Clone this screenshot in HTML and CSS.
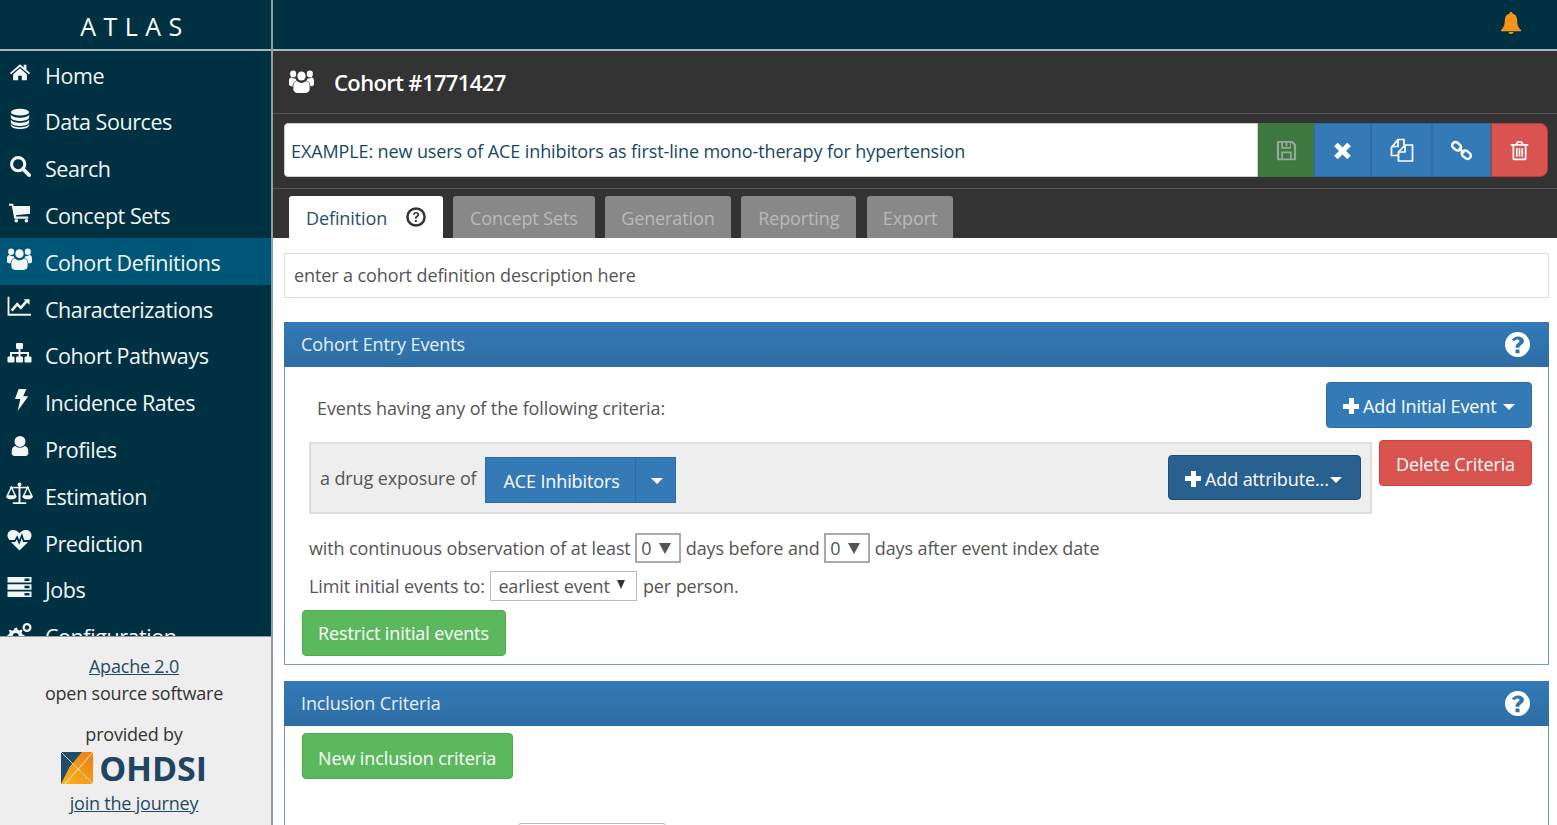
FILE: index.html
```html
<!DOCTYPE html>
<html lang="en">
<head>
<meta charset="utf-8">
<title>ATLAS</title>
<link rel="stylesheet" href="styles.css">
</head>
<body>
<svg class="defs" width="0" height="0" aria-hidden="true">
  <symbol id="i-users" viewBox="0 0 24 20" preserveAspectRatio="none">
    <circle cx="12" cy="5.2" r="4"/><circle cx="4" cy="3.4" r="2.9"/><circle cx="20" cy="3.4" r="2.9"/>
    <path d="M5.6 19.2c-.9-.6-1.400-1.500-1.400-2.700v-2.800c0-2.200 1.400-3.800 3.400-4.100 1.200 1 2.700 1.600 4.400 1.600s3.200-.6 4.400-1.600c2 .3 3.400 1.900 3.400 4.100v2.800c0 1.200-.5 2.100-1.400 2.700-.8.5-1.700.8-2.800.8H8.400c-1.100 0-2-.3-2.800-.8z"/>
    <path d="M0 12.600V9.400c0-1.600 1-2.800 2.400-3 .8.700 1.800 1 2.800 1 .4 0 .7 0 1-.1.300.8.700 1.400 1.200 1.900-2.300.6-3.800 2.500-4 5-1.800-.1-3.400-.5-3.400-1.600zM24 12.600V9.400c0-1.600-1-2.800-2.400-3-.8.700-1.800 1-2.800 1-.4 0-.7 0-1-.1-.3.800-.7 1.400-1.200 1.900 2.300.6 3.800 2.500 4 5 1.800-.1 3.400-.5 3.400-1.600z"/>
  </symbol>
  <symbol id="i-q" viewBox="0 0 24 24">
    <path fill-rule="evenodd" d="M12 0a12 12 0 1 0 0 24 12 12 0 0 0 0-24zm1.900 20.300h-3.800v-3.400h3.800v3.400zm3.600-9.700c-.5.800-1.200 1.400-2.200 2-.9.600-1.400 1-1.400 1.900v.7h-3.700v-1c0-1.700.8-2.700 2-3.500 1.100-.7 1.700-1.100 1.700-2 0-.9-.8-1.500-1.900-1.500-1.200 0-2.100.6-3 1.700L6.500 7.500C8 5.600 9.900 4.300 12.300 4.300c3 0 5.900 1.700 5.900 4.200 0 .8-.2 1.500-.7 2.100z"/>
  </symbol>
</svg>
<div class="app">
  <aside class="sidebar">
    <div class="brand">ATLAS</div>
    <nav class="nav">
      <a class="nav-item"><svg class="nav-icon" viewBox="0 0 24 24"><path d="M12 3.500 1 13l1.300 1.500L12 6.200l9.700 8.300L23 13l-4-3.500V4h-3v3z"/><path d="M12 8 4.500 14.500V21h5.500v-5h4v5h5.500v-6.500z"/></svg><span>Home</span></a>
      <a class="nav-item"><svg class="nav-icon" viewBox="0 0 24 24"><ellipse cx="12" cy="4.500" rx="10" ry="3.800"/><path d="M2 7c1 2.500 5.500 3.500 10 3.500S21 9.500 22 7v3.500c-1 2.500-5.500 3.600-10 3.600S3 13 2 10.500z"/><path d="M2 12.500c1 2.500 5.500 3.500 10 3.500s9-1 10-3.500V16c-1 2.500-5.500 3.600-10 3.600S3 18.500 2 16z"/><path d="M2 17.500c1 2.500 5.500 3.500 10 3.500s9-1 10-3.500v1.600c-.6 2.500-5.500 3.900-10 3.900S2.600 21.600 2 19.100z"/></svg><span>Data Sources</span></a>
      <a class="nav-item"><svg class="nav-icon" viewBox="0 0 24 24"><circle cx="10" cy="10" r="7.200" fill="none" stroke="currentColor" stroke-width="3.400"/><path d="M15 15l7 7" stroke="currentColor" stroke-width="4" stroke-linecap="round"/></svg><span>Search</span></a>
      <a class="nav-item"><svg class="nav-icon" viewBox="0 0 24 24"><path d="M0 3h4.500l.6 2.500H23v8.500L7.500 15.500l.4 1.500H21v2.400H5.800L3 5.300H0z"/><circle cx="8" cy="21.500" r="2"/><circle cx="19" cy="21.500" r="2"/></svg><span>Concept Sets</span></a>
      <a class="nav-item active"><svg class="nav-icon wide"><use href="#i-users"/></svg><span>Cohort Definitions</span></a>
      <a class="nav-item"><svg class="nav-icon wide" viewBox="0 0 26 24"><path d="M1 2v19.500h24.500" fill="none" stroke="currentColor" stroke-width="2"/><path d="M4.500 17l6-7 4 4 6-7" fill="none" stroke="currentColor" stroke-width="2.800"/><path d="M17.500 4.500h6.500V11z"/></svg><span>Characterizations</span></a>
      <a class="nav-item"><svg class="nav-icon wide" viewBox="0 0 24 22"><rect x="8.500" y="1" width="7" height="6" rx="1"/><rect x="0" y="14.500" width="7" height="6" rx="1"/><rect x="8.500" y="14.500" width="7" height="6" rx="1"/><rect x="17" y="14.500" width="7" height="6" rx="1"/><path d="M11 7h2v3h8.500v5h-2v-3H13v3h-2v-3H4.500v3h-2v-5H11z"/></svg><span>Cohort Pathways</span></a>
      <a class="nav-item"><svg class="nav-icon" viewBox="0 0 24 24"><path d="M10.500 0h8.500l-3.500 8H21L9.500 24l2.800-13H6.500z"/></svg><span>Incidence Rates</span></a>
      <a class="nav-item"><svg class="nav-icon" viewBox="0 0 24 24"><circle cx="12" cy="7" r="6"/><path d="M7 12c1.300 1.200 3 1.800 5 1.800s3.700-.6 5-1.800c2.700.3 4 2.500 4 6v2.300c0 1.500-1.300 2.700-3 2.700H6c-1.700 0-3-1.200-3-2.700V18c0-3.500 1.300-5.700 4-6z"/></svg><span>Profiles</span></a>
      <a class="nav-item"><svg class="nav-icon scale" viewBox="0 0 28 24"><path d="M13 2.500h2V21h6v2H7v-2h6z"/><circle cx="14" cy="2.500" r="2"/><path d="M4 5h20v1.600H4z"/><path d="M5.500 5.500 1.200 14.500h8.600zM22.500 5.500l-4.300 9h8.600z" fill="none" stroke="currentColor" stroke-width="1.500"/><path d="M0 14.500h11c0 2.300-2.500 3.500-5.500 3.500S0 16.800 0 14.500zM17 14.500h11c0 2.300-2.500 3.500-5.500 3.500S17 16.800 17 14.500z"/></svg><span>Estimation</span></a>
      <a class="nav-item"><svg class="nav-icon wide" viewBox="0 0 24 22"><path fill-rule="evenodd" d="M12 21.500 3.500 13h4.200l1.600-2.800 2.400 5.500 2.600-6.700 1.200 4h5L12 21.500zM2 11C.7 9.700 0 8 0 6.500 0 3 2.500 1 6 1c2.400 0 4.400 1.300 6 3.200C13.600 2.300 15.600 1 18 1c3.500 0 6 2 6 5.500 0 1.500-.7 3.200-2 4.500h-5.300l-2.300-7-2.700 7-2-4.700L7 11H2z"/></svg><span>Prediction</span></a>
      <a class="nav-item"><svg class="nav-icon wide" viewBox="0 0 24 22"><path fill-rule="evenodd" d="M0 1h24v5.500H0zm17 1.500v2.500h5V2.500zM0 8.200h24v5.500H0zm17 1.500v2.500h5V9.700zM0 15.500h24V21H0zm17 1.500v2.500h5V17z"/></svg><span>Jobs</span></a>
      <a class="nav-item"><svg class="nav-icon wide" viewBox="0 0 24 22"><path d="M8 5l1.500-.5.600 2.200 1.900.8 2-1.100 1.100 1.200-1 2 .8 1.900 2.100.6v1.600l-2.100.6-.8 1.900 1 2-1.100 1.200-2-1.100-1.900.8-.6 2.200H7l-.6-2.200-1.900-.8-2 1.100-1.200-1.200 1-2-.7-1.900L0 13.500v-1.600l1.600-.6.700-1.900-1-2L2.500 6.700l2 1.100 1.900-.8L7 5zm.2 5a3 3 0 1 0 0 6 3 3 0 0 0 0-6z"/><circle cx="19.500" cy="4.500" r="3.400" fill="none" stroke="currentColor" stroke-width="2.200"/></svg><span>Configuration</span></a>
    </nav>
    <div class="side-foot">
      <a class="foot-link">Apache 2.0</a>
      <div class="foot-line">open source software</div>
      <div class="foot-line foot-gap">provided by</div>
      <div class="logo">
        <svg class="logo-mark" viewBox="0 0 32 32">
          <defs><linearGradient id="lg" x1="0" y1="1" x2="1" y2="0"><stop offset="0" stop-color="#f9b61d"/><stop offset="1" stop-color="#ee7d11"/></linearGradient></defs>
          <rect width="32" height="32" fill="url(#lg)"/>
          <path d="M0 0h21L8.500 15 0 32z" fill="#214a6b"/>
          <path d="M0 0 32 32M32 0 4 32" stroke="#fff" stroke-width=".8" fill="none"/>
        </svg>
        <span class="logo-text">OHDSI</span>
      </div>
      <a class="foot-link">join the journey</a>
    </div>
  </aside>
  <main class="main">
    <header class="topbar">
      <svg class="bell" viewBox="0 0 20 22"><path d="M10 0c1 0 1.600.7 1.600 1.700 3 .7 4.600 3.200 4.600 6.700 0 5 1.300 7.300 3.800 9.600v1.200H0V18c2.500-2.300 3.800-4.600 3.800-9.600 0-3.500 1.600-6 4.600-6.700C8.400.7 9 0 10 0zM7.500 20h5c0 1.300-1.100 2-2.500 2s-2.500-.7-2.500-2z"/></svg>
    </header>
    <section class="dark-head">
      <div class="title-row">
        <svg class="title-icon"><use href="#i-users"/></svg>
        <h1 class="title">Cohort #1771427</h1>
      </div>
      <div class="name-row">
        <div class="name-input">EXAMPLE: new users of ACE inhibitors as first-line mono-therapy for hypertension</div>
        <button class="tool green"><svg class="tool-icon dim" viewBox="0 0 24 24"><path fill-rule="evenodd" d="M2 1h17l4 4v16.500c0 .8-.7 1.500-1.500 1.500h-19C1.700 23 1 22.300 1 21.500v-19C1 1.700 1.400 1 2 1zm1.500 2v18h2.500v-8h12v8h2.500V6l-3-3h-.5v7H6V3zM8 3v5h8V3h-3v4h-2V3zm0 12v6h8v-6z"/></svg></button>
        <button class="tool blue"><svg class="tool-icon" viewBox="0 0 24 24"><path d="M6.500 3.500 12 9l5.500-5.500 3.500 3.500-5.500 5.500 5.500 5.500-3.500 3.500L12 16l-5.500 5.500L3 18l5.500-5.500L3 7z" stroke="#fff" stroke-linejoin="round"/></svg></button>
        <button class="tool blue w61"><svg class="tool-icon copy" viewBox="0 0 24 24"><g fill="none" stroke="#fff" stroke-width="1.700" stroke-linejoin="round"><path d="M8 17.500H1.500v-8L8 1.500h6V7"/><path d="M8 1.500v7H1.500"/><path d="M8.500 14 15 7h7.500v16H8.500z"/><path d="M15 7v7H8.500"/></g></svg></button>
        <button class="tool blue w59"><svg class="tool-icon" viewBox="0 0 24 24"><g fill="none" stroke="#fff" stroke-width="2.800"><rect x="1" y="3.500" width="11" height="7.500" rx="3.700" transform="rotate(40 6.500 7.200)"/><rect x="12" y="13" width="11" height="7.500" rx="3.700" transform="rotate(40 17.500 16.700)"/><path d="M9 9l6 6"/></g></svg></button>
        <button class="tool red"><svg class="tool-icon" viewBox="0 0 24 24"><path d="M9 1.500h6l1.500 3H22v2h-2v15c0 1-.7 1.500-1.500 1.500h-13C4.700 23 4 22.500 4 21.500v-15H2v-2h5.500zm.7 3h4.600l-.7-1.300h-3.200zM6 6.500V21h12V6.500z"/><path d="M8 9h1.800v10H8zM11.100 9h1.800v10h-1.800zM14.200 9H16v10h-1.800z"/></svg></button>
      </div>
      <div class="tabs">
        <a class="tab current">Definition <svg class="tab-help" viewBox="0 0 24 24"><circle cx="12" cy="12" r="10.300" fill="none" stroke="currentColor" stroke-width="3"/><path d="M8.300 9.300C8.600 7.200 10 6 12.100 6c2.200 0 3.700 1.300 3.700 3.100 0 1.400-.8 2.100-1.800 2.800-1 .7-1.200 1.100-1.200 2.200h-2c0-1.900.5-2.600 1.700-3.500.8-.6 1.200-.9 1.200-1.500 0-.7-.7-1.200-1.600-1.200-1 0-1.700.6-1.900 1.700zM10.700 15.500h2.200v2.500h-2.200z"/></svg></a>
        <a class="tab">Concept Sets</a>
        <a class="tab">Generation</a>
        <a class="tab">Reporting</a>
        <a class="tab">Export</a>
      </div>
    </section>
    <div class="content">
      <div class="desc">enter a cohort definition description here</div>
      <section class="panel">
        <div class="panel-head"><span>Cohort Entry Events</span><svg class="panel-help"><use href="#i-q"/></svg></div>
        <div class="panel-body">
          <div class="events-row">
            <span class="events-label">Events having any of the following criteria:</span>
            <button class="btn primary add-initial"><span class="plus"></span>Add Initial Event<span class="caret"></span></button>
          </div>
          <div class="criteria-row">
            <div class="criteria-box">
              <div class="criteria-left">
                <span>a drug exposure of</span>
                <div class="split">
                  <button class="split-main">ACE Inhibitors</button>
                  <button class="split-caret"><span class="caret"></span></button>
                </div>
              </div>
              <button class="btn navy add-attr"><span class="plus"></span>Add attribute...<span class="caret tight"></span></button>
            </div>
            <button class="btn danger">Delete Criteria</button>
          </div>
          <div class="line-row first">with continuous observation of at least <span class="sel small">0<i class="arrow"></i></span> days before and <span class="sel small">0<i class="arrow"></i></span> days after event index date</div>
          <div class="line-row second">Limit initial events to: <span class="sel">earliest event<i class="arrow mini"></i></span> per person.</div>
          <button class="btn success restrict">Restrict initial events</button>
        </div>
      </section>
      <section class="panel lower">
        <div class="panel-head"><span>Inclusion Criteria</span><svg class="panel-help"><use href="#i-q"/></svg></div>
        <div class="panel-body tall">
          <button class="btn success new-incl">New inclusion criteria</button>
          <div class="cut-select"></div>
        </div>
      </section>
    </div>
  </main>
</div>
</body>
</html>
```
FILE: styles.css
```css
* { box-sizing: border-box; }
html, body { margin: 0; height: 825px; overflow: hidden; }
body { font-family: "Open Sans", "Noto Sans", sans-serif; font-size: 18px; letter-spacing: -.11px; color: #555; background: #fff; }
button { font: inherit; letter-spacing: inherit; cursor: pointer; }
.defs { position: absolute; }
.app { display: flex; height: 825px; }

.sidebar { width: 273px; flex: none; display: flex; flex-direction: column; background: #003142; border-right: 2px solid #8f9fa6; }
.brand { height: 51px; flex: none; border-bottom: 2px solid #a9b5ba; color: #fff; text-align: center; font-size: 25px; font-weight: 500; letter-spacing: 7.500px; line-height: 53px; padding-right: 1px; }
.nav { flex: 1; overflow: hidden; color: #f2f6f7; }
.nav-item { display: flex; align-items: center; height: 46.800px; padding: 1px 0 0 8px; font-size: 21.500px; letter-spacing: -.43px; }
.nav-item:first-child { height: 47px; }
.nav-item.active { background: #005677; }
.nav-icon { width: 24px; height: 22px; margin-right: 13px; fill: currentColor; flex: none; margin-top: -6px; }
.nav-icon.wide { width: 25px; height: 22px; margin-left: -1px; }
.nav-icon.scale { width: 27px; height: 23px; margin: -6px 12px 0 -2px; }
.side-foot { height: 189px; flex: none; background: #eee; border-top: 1px solid #9a9a9a; color: #333; text-align: center; padding: 16px 3px 0 0; font-size: 18px; letter-spacing: -.2px; display: flex; flex-direction: column; align-items: center; line-height: 27px; }
.foot-link { color: #1f4a63; text-decoration: underline; }
.foot-line { line-height: 27px; }
.foot-gap { margin-top: 14px; }
.logo { display: flex; align-items: center; gap: 6px; height: 32px; margin: 4px 0 6px; }
.logo-mark { width: 32px; height: 32px; }
.logo-text { font-size: 34px; font-weight: 700; color: #1f4563; letter-spacing: -.1px; line-height: 32px; }

.main { flex: 1; min-width: 0; display: flex; flex-direction: column; }
.topbar { height: 51px; flex: none; background: #003142; border-bottom: 2px solid #a9b9bf; display: flex; justify-content: flex-end; padding: 12px 36px 0 0; }
.bell { width: 20px; height: 22px; fill: #f7941d; }
.dark-head { background: #333; flex: none; height: 187px; display: flex; flex-direction: column; }
.title-row { height: 63px; flex: none; display: flex; align-items: center; padding-left: 16px; border-bottom: 1px solid #555; }
.title-icon { width: 25px; height: 23px; fill: #fff; margin-right: 20px; margin-top: -2px; }
.title { margin: 0; font-size: 22px; font-weight: 600; color: #fff; letter-spacing: -.62px; }
.name-row { height: 75px; flex: none; border-bottom: 1px solid #555; display: flex; padding: 9px 9px 0 11px; align-items: flex-start; }
.name-input { flex: 1; height: 54px; background: #fff; border: 1px solid #ccc; border-radius: 4px 0 0 4px; color: #16495f; line-height: 54px; padding-left: 6px; }
.tool { width: 57px; height: 54px; padding: 0; border: 1px solid; display: flex; align-items: center; justify-content: center; }
.tool-icon { width: 21px; height: 21px; fill: #fff; }
.tool-icon.dim { fill: #9aa89c; }
.tool-icon.copy { width: 24px; height: 24px; }
.tool.green { width: 56px; background: #3e7a3f; border-color: #3e7a3f; }
.tool.blue { background: #337ab7; border-color: #2e6da4; }
.tool.w61 { width: 61px; }
.tool.w59 { width: 59px; }
.tool.red { background: #d9534f; border-color: #b93e3a; border-radius: 0 8px 8px 0; }
.tabs { flex: 1; display: flex; align-items: flex-end; padding-left: 16px; gap: 10.500px; }
.tab { height: 42px; padding: 0 16px; background: #888; color: #b9b9b9; border-radius: 3px 3px 0 0; line-height: 44px; white-space: nowrap; }
.tab.current + .tab { padding: 0 17px; }
.tab.current + .tab + .tab + .tab { padding: 0 17px; }
.tab.current { width: 154px; margin-right: -.5px; background: #fff; color: #26506a; display: flex; align-items: center; gap: 19px; padding: 2px 0 0 17px; }
.tab-help { width: 20px; height: 20px; fill: #333; color: #333; margin-top: -3px; }

.content { flex: 1; min-height: 0; overflow: hidden; padding: 15px 8px 0 11px; }
.desc { height: 45px; border: 1px solid #ddd; line-height: 43px; padding-left: 9px; margin-bottom: 24px; }
.panel { border: 1px solid #6d9fd3; border-top: 0; margin-bottom: 16px; }
.panel-head { height: 45px; margin: 0 -1px; background: linear-gradient(#337ab7, #2e6da4); color: #e9f1f8; display: flex; align-items: center; justify-content: space-between; padding: 0 19px 2px 17px; }
.panel-help { width: 25px; height: 25px; fill: #fff; margin-top: 2px; }
.panel-body { padding: 15px 16px 7px 17px; height: 297px; }
.panel-body.tall { height: 200px; padding: 7px 16px 0 17px; position: relative; }

.btn { height: 46px; border: 1px solid; border-radius: 4px; padding: 2px 16px 0; color: #fff; display: inline-flex; align-items: center; white-space: nowrap; }
.primary { background: #337ab7; border-color: #2e6da4; }
.navy { background: #286090; border-color: #204d74; }
.danger { background: #d9534f; border-color: #d43f3a; }
.success { background: #5cb85c; border-color: #4cae4c; padding: 0 16px 0 15px; }
.new-incl { padding-top: 4px; }
.plus { width: 16px; height: 16px; margin-right: 4px; background: linear-gradient(#fff,#fff) center/100% 5px no-repeat, linear-gradient(#fff,#fff) center/5px 100% no-repeat; }
.caret { width: 0; height: 0; border: 6px solid transparent; border-top-color: #fff; border-bottom: 0; margin-left: 6px; margin-top: 2px; }
.caret.tight { margin-left: 1px; }

.events-row { display: flex; align-items: center; justify-content: space-between; padding-left: 15px; height: 46px; }
.events-label { margin-top: 5px; }
.add-initial { width: 206px; }
.criteria-row { display: flex; align-items: flex-start; justify-content: space-between; margin: 12px 0 0 7px; height: 74px; }
.criteria-box { width: 1063px; height: 72px; margin-top: 2px; background: #eee; border: 2px solid #ddd; display: flex; justify-content: space-between; padding: 11px 9px 0 9px; }
.criteria-left { display: flex; gap: 8.500px; }
.criteria-left > span { margin-top: 11px; }
.split { display: flex; height: 46px; margin-top: 2px; }
.split-main { width: 151px; background: #337ab7; border: 1px solid #2e6da4; color: #fff; padding: 2px 0 0 2px; }
.split-caret { width: 40px; background: #337ab7; border: 1px solid #2e6da4; border-left: 0; padding: 0 3px 0 0; display: flex; align-items: center; justify-content: center; }
.add-attr { width: 193px; height: 45px; margin-top: 0; }
.danger { width: 153px; justify-content: center; padding: 2px 0 0; }
.line-row { display: flex; align-items: center; gap: 0; margin-left: 7px; height: 30px; white-space: pre; }
.line-row.first { margin-top: 19px; }
.line-row.second { margin-top: 8px; }
.sel { height: 30px; margin: 0 1px; border: 1px solid #bbb; background: #fff; display: inline-flex; align-items: center; padding: 0 6px 0 7px; width: 147px; justify-content: space-between; color: #555; }
.sel.small { width: 46px; margin: 0; border: 2px solid #aaa; padding: 0 8px 0 4px; }
.arrow { width: 0; height: 0; border: 6px solid transparent; border-top: 11px solid #555; border-bottom: 0; }
.arrow.mini { border-width: 4px; border-top-width: 9px; border-bottom: 0; border-top-color: #333; margin-top: -3px; margin-right: 5px; }
.restrict { margin: 9px 0 0 0; }
.cut-select { position: absolute; left: 233px; top: 97px; width: 148px; height: 30px; border: 1px solid #bbb; border-radius: 3px; }
```
